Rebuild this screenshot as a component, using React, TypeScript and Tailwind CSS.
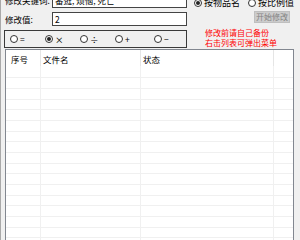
import React from "react";

const Radio = ({ checked, label, cls }: { checked?: boolean; label: string; cls?: string }) => (
  <div className={"flex items-center " + (cls ?? "")}>
    <div className="w-[8px] h-[8px] rounded-full border border-[#333] bg-white flex items-center justify-center shrink-0">
      {checked && <div className="w-[4px] h-[4px] rounded-full bg-[#222]" />}
    </div>
    <span className="ml-[2px] leading-none">{label}</span>
  </div>
);

const rowHeights = ["h-[12px]", "h-[11px]", "h-[11px]", "h-[10px]", "h-[11px]", "h-[11px]", "h-[10px]", "h-[11px]", "h-[11px]", "h-[10px]", "h-[11px]", "h-[11px]", "h-[10px]", "h-[11px]", "h-[11px]", "h-[10px]", "h-[11px]", "h-[11px]"];

export default function App() {
  return (
    <div className="w-[300px] h-[240px] overflow-hidden bg-[#f0f0f0] border-l border-[#a9a9a9] text-[8.5px] text-black font-['Noto_Sans_CJK_SC','Noto_Sans',sans-serif]">
      <div className="flex flex-col -mt-[7px]">
        {/* Row 1 */}
        <div className="flex h-[15px]">
          <div className="w-[51px] pl-[4px] flex items-center">修改关键词:</div>
          <div className="w-[135px] h-[15px] border border-[#444] bg-white flex items-center pl-[2px]">番逛, 烦恼, 死亡</div>
          <div className="flex self-end mb-[1px] ml-[7px] h-[9px] text-[9px]">
            <Radio checked label="按物品名" cls="w-[54px]" />
            <Radio label="按比例值" />
          </div>
        </div>
        {/* Row 2 */}
        <div className="flex h-[14px] mt-[4px]">
          <div className="w-[51px] pl-[4px] flex items-center">修改值:</div>
          <div className="w-[135px] h-[14px] border border-[#444] bg-white flex items-center pl-[2px]">2</div>
          <div className="ml-[67px] -mt-[1px] w-[36px] h-[12px] border border-[#bfbfbf] bg-[#cccccc] text-[#838383] flex items-center justify-center text-[8px]">开始修改</div>
        </div>
        {/* Row 3 */}
        <div className="flex mt-[4px]">
          <div className="ml-[3px] w-[183px] h-[18px] border border-[#3a3a3a] flex items-center pl-[5px]">
            <Radio label="=" cls="w-[35px]" />
            <Radio checked label="×" cls="w-[35px]" />
            <Radio label="÷" cls="w-[35px]" />
            <Radio label="+" cls="w-[39px]" />
            <Radio label="−" />
          </div>
          <div className="ml-[18px] -mt-[2px] text-[#ff0000] text-[8px] leading-[10px]">
            <div>修改前请自己备份</div>
            <div>右击列表可弹出菜单</div>
          </div>
        </div>
        {/* List */}
        <div className="ml-[4px] mt-[1px] w-[289px] h-[200px] border border-[#828790] bg-white flex flex-col">
          <div className="flex h-[16px] shrink-0">
            <div className="w-[35px] border-r border-[#e5e5e5] pl-[5px] pt-[3px] leading-none flex items-center">序号</div>
            <div className="w-[100px] border-r border-[#e5e5e5] pl-[2px] pt-[3px] leading-none flex items-center">文件名</div>
            <div className="w-[133px] border-r border-[#e5e5e5] pl-[2px] pt-[3px] leading-none flex items-center">状态</div>
            <div className="flex-1" />
          </div>
          {rowHeights.map((h, i) => (
            <div key={i} className={"flex shrink-0 border-b border-[#f0f0f0] " + h}>
              <div className="w-[35px] border-r border-[#f0f0f0]" />
              <div className="w-[100px] border-r border-[#f0f0f0]" />
              <div className="w-[133px] border-r border-[#f0f0f0]" />
              <div className="flex-1" />
            </div>
          ))}
        </div>
      </div>
    </div>
  );
}
